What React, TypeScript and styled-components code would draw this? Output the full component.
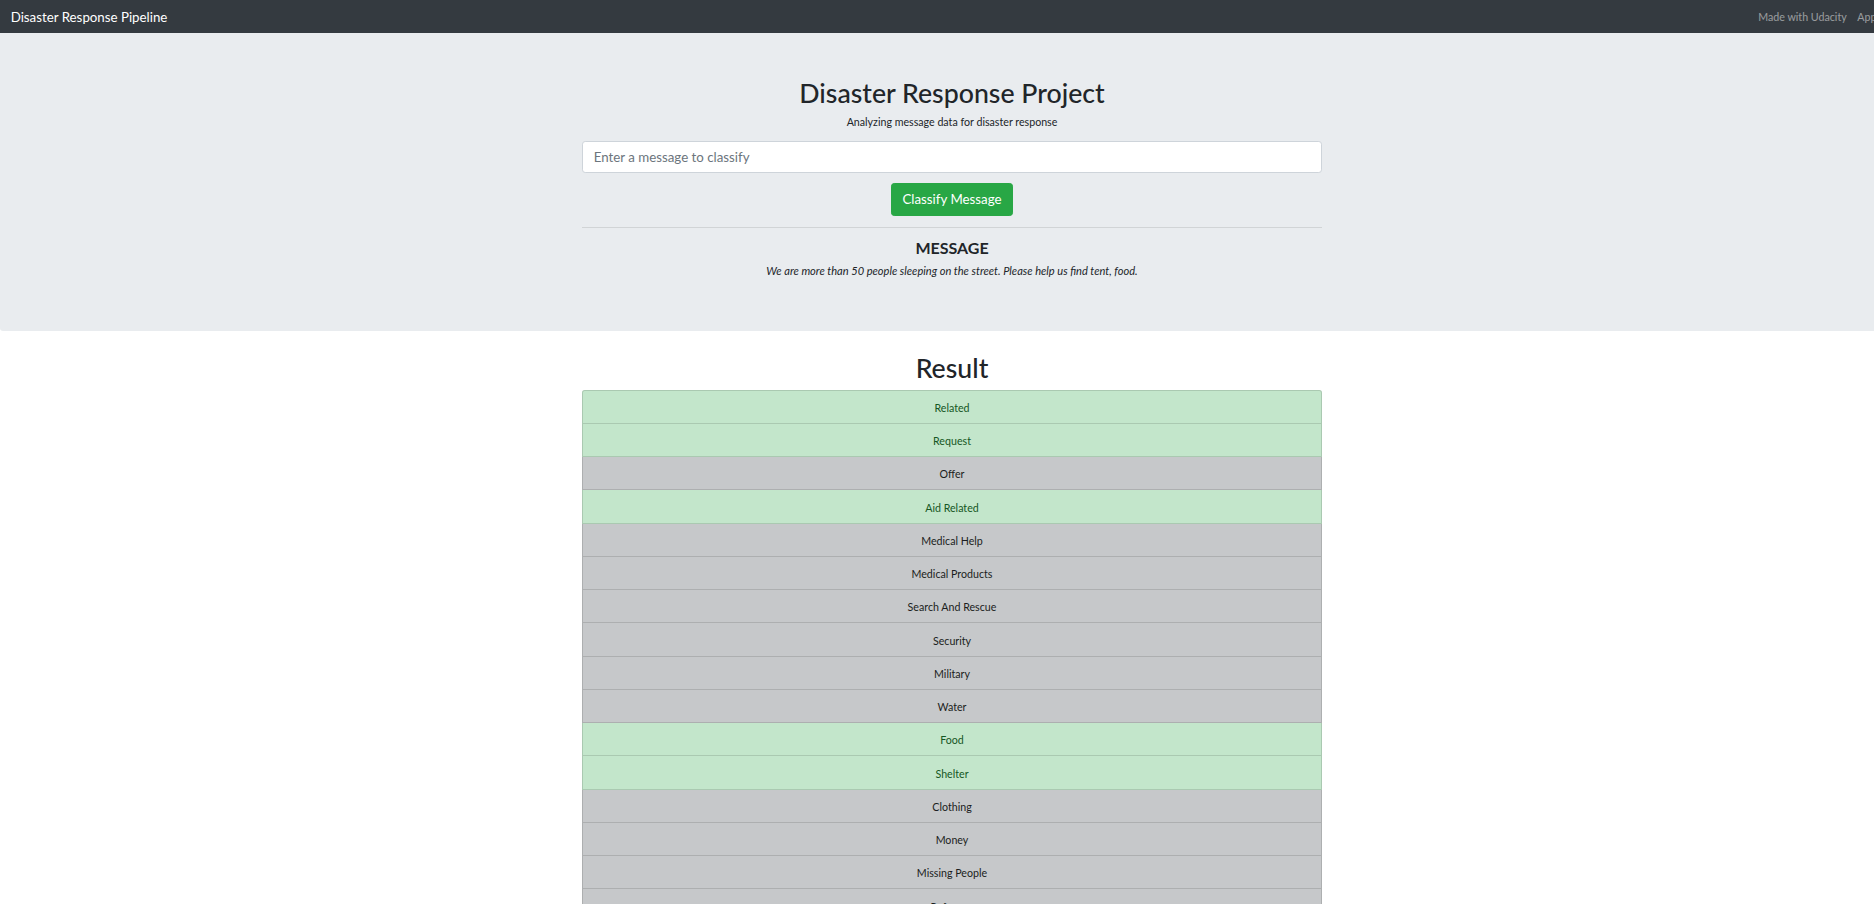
import React from "react";
import styled, { createGlobalStyle } from "styled-components";

const GlobalStyle = createGlobalStyle`
  html, body {
    margin: 0;
    padding: 0;
    overflow: hidden;
    background: #ffffff;
  }
  body {
    font-family: Lato, "Open Sans", "Noto Sans", sans-serif;
    color: #212529;
    font-size: 10.67px;
    line-height: 16px;
  }
  * { box-sizing: border-box; }
`;

const Page = styled.div`
  width: 1904px;
`;

const Navbar = styled.nav`
  height: 33px;
  background: #343a40;
  display: flex;
  align-items: center;
  padding: 0 10.7px;
`;

const Brand = styled.a`
  color: #ffffff;
  font-size: 13.3px;
  line-height: 20px;
  text-decoration: none;
  padding-top: 1px;
`;

const NavLinks = styled.ul`
  margin: 0 0 0 auto;
  padding: 0;
  list-style: none;
  display: flex;
`;

const NavLink = styled.a`
  display: block;
  padding: 1px 5.3px 0;
  color: rgba(255, 255, 255, 0.5);
  font-size: 10.67px;
  line-height: 16px;
  text-decoration: none;
`;

const Jumbotron = styled.header`
  background: #e9ecef;
  border-radius: 0 0 3.2px 3.2px;
  padding: 43.7px 0 41.5px;
  margin-bottom: 21.3px;
`;

const Container = styled.div`
  width: 760px;
  margin: 0 auto;
  padding: 0 10px;
`;

const Title = styled.h1`
  margin: 0 0 5.3px;
  font-size: 26.7px;
  line-height: 32px;
  font-weight: 500;
  text-align: center;
  color: #212529;
`;

const Subtitle = styled.p`
  margin: 0 0 10.7px;
  text-align: center;
  font-size: 10.67px;
  line-height: 16px;
`;

const Form = styled.form`
  display: flex;
  flex-direction: column;
  align-items: center;
`;

const Input = styled.input`
  width: 100%;
  height: 32px;
  padding: 0 10.7px;
  font-family: inherit;
  font-size: 13.3px;
  color: #495057;
  background: #ffffff;
  border: 1px solid #ced4da;
  border-radius: 3.2px;
  outline: none;
  &::placeholder {
    color: #6c757d;
  }
`;

const Button = styled.button`
  margin-top: 10px;
  height: 33px;
  padding: 0 10.7px;
  font-family: inherit;
  font-size: 13.3px;
  line-height: 20px;
  color: #ffffff;
  background: #28a745;
  border: 1px solid #28a745;
  border-radius: 3.2px;
  cursor: pointer;
`;

const Rule = styled.hr`
  margin: 11px 0 10.7px;
  border: 0;
  border-top: 1px solid rgba(0, 0, 0, 0.1);
`;

const MessageHeading = styled.h4`
  margin: 0 0 5.3px;
  font-size: 16px;
  line-height: 19.2px;
  font-weight: 700;
  text-align: center;
  text-transform: uppercase;
  color: #212529;
`;

const MessageText = styled.p`
  margin: 0 0 10.7px;
  font-style: italic;
  text-align: center;
  font-size: 11.1px;
  line-height: 16px;
`;

const ResultTitle = styled(Title)`
  margin-bottom: 5.3px;
`;

const List = styled.ul`
  margin: 0;
  padding: 0;
  list-style: none;
  display: flex;
  flex-direction: column;
`;

const Item = styled.li<{ $ok: boolean }>`
  padding: 9.25px 20px 7px;
  font-size: 10.67px;
  line-height: 16px;
  text-align: center;
  border: 1px solid rgba(0, 0, 0, 0.125);
  background: ${(p) => (p.$ok ? "#c3e6cb" : "#c6c8ca")};
  color: ${(p) => (p.$ok ? "#155724" : "#1b1e21")};
  & + & {
    border-top-width: 0;
  }
  &:first-child {
    border-radius: 2.7px 2.7px 0 0;
  }
`;

const categories: [string, boolean][] = [
  ["Related", true],
  ["Request", true],
  ["Offer", false],
  ["Aid Related", true],
  ["Medical Help", false],
  ["Medical Products", false],
  ["Search And Rescue", false],
  ["Security", false],
  ["Military", false],
  ["Water", false],
  ["Food", true],
  ["Shelter", true],
  ["Clothing", false],
  ["Money", false],
  ["Missing People", false],
  ["Refugees", false],
  ["Death", false],
  ["Other Aid", false],
  ["Infrastructure Related", false],
  ["Transport", false],
  ["Buildings", false],
  ["Electricity", false],
  ["Tools", false],
  ["Hospitals", false],
  ["Shops", false],
  ["Aid Centers", false],
  ["Other Infrastructure", false],
  ["Weather Related", false],
  ["Floods", false],
  ["Storm", false],
  ["Fire", false],
  ["Earthquake", false],
  ["Cold", false],
  ["Other Weather", false],
  ["Direct Report", true],
];

export default function App() {
  return (
    <Page>
      <GlobalStyle />
      <Navbar>
        <Brand href="#">Disaster Response Pipeline</Brand>
        <NavLinks>
          <li>
            <NavLink href="#">Made with Udacity</NavLink>
          </li>
          <li>
            <NavLink href="#">Appen</NavLink>
          </li>
        </NavLinks>
      </Navbar>
      <Jumbotron>
        <Container>
          <Title>Disaster Response Project</Title>
          <Subtitle>Analyzing message data for disaster response</Subtitle>
          <Form onSubmit={(e) => e.preventDefault()}>
            <Input type="text" name="query" placeholder="Enter a message to classify" />
            <Button type="submit">Classify Message</Button>
          </Form>
          <Rule />
          <MessageHeading>Message</MessageHeading>
          <MessageText>
            We are more than 50 people sleeping on the street. Please help us find tent, food.
          </MessageText>
        </Container>
      </Jumbotron>
      <Container>
        <ResultTitle>Result</ResultTitle>
        <List>
          {categories.map(([name, ok]) => (
            <Item key={name} $ok={ok}>
              {name}
            </Item>
          ))}
        </List>
      </Container>
    </Page>
  );
}
